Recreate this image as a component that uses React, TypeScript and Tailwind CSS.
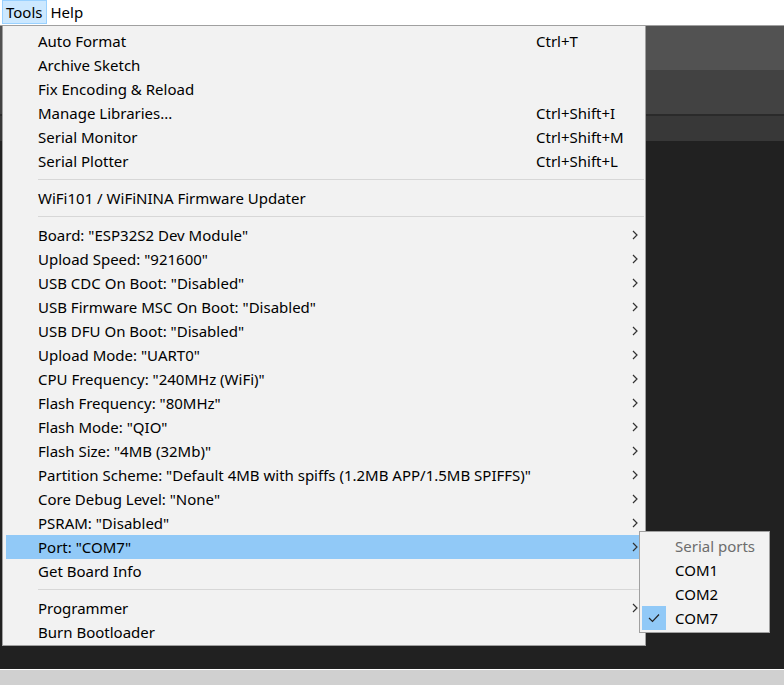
import React from 'react'

type Item =
  | { kind: 'item'; label: string; shortcut?: string; sub?: boolean; active?: boolean }
  | { kind: 'sep' }

const ITEMS: Item[] = [
  { kind: 'item', label: 'Auto Format', shortcut: 'Ctrl+T' },
  { kind: 'item', label: 'Archive Sketch' },
  { kind: 'item', label: 'Fix Encoding & Reload' },
  { kind: 'item', label: 'Manage Libraries...', shortcut: 'Ctrl+Shift+I' },
  { kind: 'item', label: 'Serial Monitor', shortcut: 'Ctrl+Shift+M' },
  { kind: 'item', label: 'Serial Plotter', shortcut: 'Ctrl+Shift+L' },
  { kind: 'sep' },
  { kind: 'item', label: 'WiFi101 / WiFiNINA Firmware Updater' },
  { kind: 'sep' },
  { kind: 'item', label: 'Board: "ESP32S2 Dev Module"', sub: true },
  { kind: 'item', label: 'Upload Speed: "921600"', sub: true },
  { kind: 'item', label: 'USB CDC On Boot: "Disabled"', sub: true },
  { kind: 'item', label: 'USB Firmware MSC On Boot: "Disabled"', sub: true },
  { kind: 'item', label: 'USB DFU On Boot: "Disabled"', sub: true },
  { kind: 'item', label: 'Upload Mode: "UART0"', sub: true },
  { kind: 'item', label: 'CPU Frequency: "240MHz (WiFi)"', sub: true },
  { kind: 'item', label: 'Flash Frequency: "80MHz"', sub: true },
  { kind: 'item', label: 'Flash Mode: "QIO"', sub: true },
  { kind: 'item', label: 'Flash Size: "4MB (32Mb)"', sub: true },
  { kind: 'item', label: 'Partition Scheme: "Default 4MB with spiffs (1.2MB APP/1.5MB SPIFFS)"', sub: true },
  { kind: 'item', label: 'Core Debug Level: "None"', sub: true },
  { kind: 'item', label: 'PSRAM: "Disabled"', sub: true },
  { kind: 'item', label: 'Port: "COM7"', sub: true, active: true },
  { kind: 'item', label: 'Get Board Info' },
  { kind: 'sep' },
  { kind: 'item', label: 'Programmer', sub: true },
  { kind: 'item', label: 'Burn Bootloader' },
]

function Chevron() {
  return (
    <svg width="6" height="10" viewBox="0 0 6 10" className="text-[#333333]">
      <path d="M1 1 L5 5 L1 9" fill="none" stroke="currentColor" strokeWidth="1.2" />
    </svg>
  )
}

function Check() {
  return (
    <svg width="12" height="10" viewBox="0 0 12 10">
      <path d="M1 5 L4.5 8.5 L11 1.5" fill="none" stroke="#222" strokeWidth="1.2" />
    </svg>
  )
}

export default function App() {
  return (
    <div
      className="relative w-[784px] h-[685px] overflow-hidden flex flex-col bg-[#212121] text-[15px] text-black"
      style={{ fontFamily: '"Noto Sans", "Open Sans", sans-serif' }}
    >
      {/* menu bar */}
      <div className="h-[26px] bg-white border-b border-[#a0a0a0] flex items-start pl-[2px]">
        <div className="h-[24px] px-[3px] flex items-center bg-[#cce8ff] border border-[#99d1ff]">Tools</div>
        <div className="h-[24px] px-[4px] flex items-center">Help</div>
      </div>

      {/* editor background */}
      <div className="h-[44px] bg-[#525252]" />
      <div className="h-[44px] bg-[#424242]" />
      <div className="h-[2px] bg-[#2a2a2a]" />
      <div className="h-[25px] bg-[#383838]" />
      <div className="flex-1 bg-[#212121]" />
      <div className="h-[16px] bg-[#d0d0d0] border-t border-white" />

      {/* Tools dropdown */}
      <div className="absolute left-[2px] top-[25px] w-[644px] bg-[#f2f2f2] border border-[#a0a0a0] pt-[3px] pb-[1px] pl-[3px] pr-[1px]">
        {ITEMS.map((it, i) =>
          it.kind === 'sep' ? (
            <div key={i} className="h-[13px] flex items-center pl-[32px]">
              <div className="h-px w-full bg-[#d7d7d7]" />
            </div>
          ) : (
            <div
              key={i}
              className={
                'h-[24px] flex items-center pl-[32px] pr-[6px] ' +
                (it.active ? 'bg-[#91c9f7]' : '')
              }
            >
              <span className="flex-1 whitespace-nowrap">{it.label}</span>
              {it.shortcut && <span className="w-[102px] whitespace-nowrap">{it.shortcut}</span>}
              {it.sub && <Chevron />}
            </div>
          )
        )}
      </div>

      {/* Port submenu */}
      <div className="absolute left-[639px] top-[531px] w-[131px] bg-[#f2f2f2] border border-[#a0a0a0] p-[2px]">
        <div className="h-[24px] flex items-center pl-[33px] text-[#6d6d6d]">Serial ports</div>
        <div className="h-[24px] flex items-center pl-[33px]">COM1</div>
        <div className="h-[24px] flex items-center pl-[33px]">COM2</div>
        <div className="h-[24px] flex items-center">
          <div className="w-[24px] h-[24px] bg-[#91c9f7] flex items-center justify-center">
            <Check />
          </div>
          <span className="pl-[9px]">COM7</span>
        </div>
      </div>
    </div>
  )
}
